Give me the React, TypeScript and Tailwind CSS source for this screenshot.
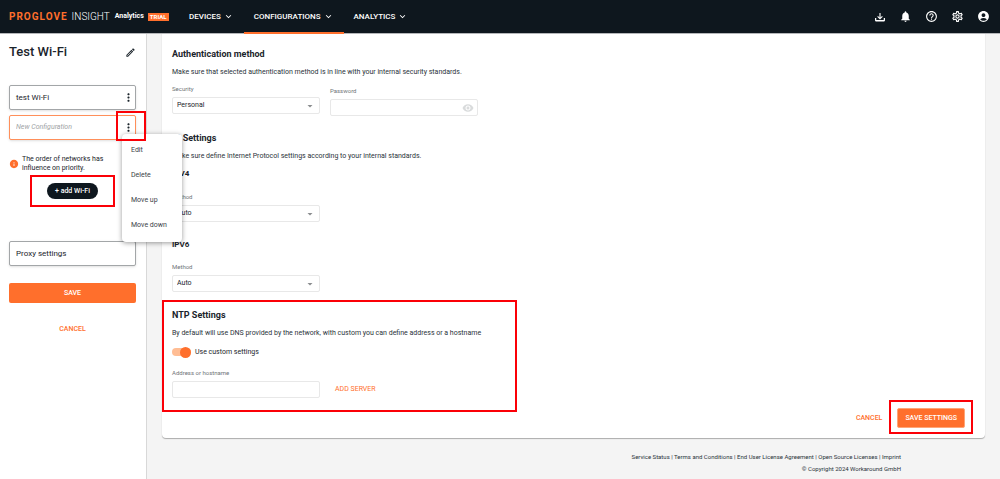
import { useState, type ReactNode } from "react";
import {
  MdAccountCircle,
  MdArrowDropDown,
  MdHelpOutline,
  MdInfo,
  MdKeyboardArrowDown,
  MdMoreVert,
  MdNotifications,
  MdOutlineEdit,
  MdOutlineSettings,
  MdVisibility,
} from "react-icons/md";

const NAV = ["DEVICES", "CONFIGURATIONS", "ANALYTICS"];
const MENU = ["Edit", "Delete", "Move up", "Move down"];
const LINKS = [
  "Service Status",
  "Terms and Conditions",
  "End User License Agreement",
  "Open Source Licenses",
  "Imprint",
];

// red callout frame around a parent that is `relative`
function Callout({ className }: { className: string }) {
  return (
    <span className={`pointer-events-none absolute z-30 border-2 border-[#fb0007] ${className}`} />
  );
}

function TrayIcon() {
  return (
    <svg viewBox="0 0 24 24" fill="currentColor" className="size-3">
      <path d="M2 14h2.500v4h15v-4H22v4.500c0 1.300-1 2.500-2.500 2.500h-15C3 21 2 19.800 2 18.500V14m10 3 5.500-5.500-1.500-1.500-2.900 2.900V4h-2.200v8.900L8 10l-1.500 1.500L12 17z" />
    </svg>
  );
}

function Header() {
  return (
    <header className="relative z-10 flex h-[33px] items-center bg-[#0e171e] pr-[10px] pl-[9px] text-white shadow-[0_1px_0_#b4b6b9]">
      <div className="flex w-[170px] items-center whitespace-nowrap">
        <span className="text-[10px] font-bold tracking-widest text-[#ff6f2c]">PROGLOVE</span>
        <span className="ml-1 text-[10px] font-light">INSIGHT</span>
        <span className="ml-[5px] text-[7px] font-bold">Analytics</span>
        <span className="ml-1 bg-[#ff6f2c] px-[2px] text-[6px] leading-[8px] font-bold">TRIAL</span>
      </div>
      <nav className="flex h-full">
        {NAV.map((item) => (
          <button
            key={item}
            type="button"
            className="relative flex items-center gap-[2px] px-[10px] text-[8px] font-medium"
          >
            {item}
            <MdKeyboardArrowDown className="size-[11px]" />
            {item === "CONFIGURATIONS" && (
              <span className="absolute inset-x-0 -bottom-px h-[2px] bg-[#ff6f2c]" />
            )}
          </button>
        ))}
      </nav>
      <div className="ml-auto flex items-center gap-[13px]">
        <button type="button" aria-label="Downloads">
          <TrayIcon />
        </button>
        <button type="button" aria-label="Notifications">
          <MdNotifications className="size-[13px]" />
        </button>
        <button type="button" aria-label="Help">
          <MdHelpOutline className="size-[13px]" />
        </button>
        <button type="button" aria-label="Settings">
          <MdOutlineSettings className="size-[13px]" />
        </button>
        <button type="button" aria-label="Account">
          <MdAccountCircle className="size-[13px]" />
        </button>
      </div>
    </header>
  );
}

function ContextMenu() {
  return (
    <div
      role="menu"
      className="absolute top-[18px] left-[112px] z-20 flex w-[60px] flex-col rounded-sm bg-white py-1 shadow-[0_1px_5px_rgba(0,0,0,0.4)]"
    >
      {MENU.map((item) => (
        <button
          key={item}
          type="button"
          role="menuitem"
          className="h-[25px] px-[9px] text-left text-[7px] whitespace-nowrap text-[#3b4248]"
        >
          {item}
        </button>
      ))}
    </div>
  );
}

const box = "flex h-[25px] items-center rounded-xs border bg-white pl-[6px]";

function Sidebar() {
  return (
    <aside className="w-[147px] shrink-0 border-r border-[#d8d8d8] bg-white pt-[10px] pr-[10px] pl-[9px]">
      <div className="flex h-[18px] items-center justify-between">
        <h1 className="text-[13px] font-medium">Test Wi-Fi</h1>
        <button type="button" aria-label="Rename">
          <MdOutlineEdit className="size-[11px]" />
        </button>
      </div>

      <div className={`${box} mt-6 justify-between border-[#a3a6a8] shadow-sm`}>
        <span className="text-[8px]">test Wi-Fi</span>
        <button type="button" aria-label="Network options">
          <MdMoreVert className="size-[13px]" />
        </button>
      </div>
      <div className={`${box} relative mt-[5px] border-[#ff8f5a] shadow-sm`}>
        <input
          aria-label="Configuration name"
          placeholder="New Configuration"
          className="w-[100px] text-[7px] italic outline-none placeholder:text-[#a0a3a5]"
        />
        <button type="button" aria-label="New configuration options" className="ml-auto">
          <MdMoreVert className="size-[13px]" />
        </button>
        <Callout className="-top-[5px] -right-[11px] size-[30px]" />
        <ContextMenu />
      </div>

      <div className="mt-[15px] flex items-center gap-[3px]">
        <MdInfo className="size-[10px] shrink-0 text-[#ff6f2c]" />
        <p className="w-[90px] text-[7px] leading-[9px]">
          The order of networks has influence on priority.
        </p>
      </div>
      <div className="mt-[10px] flex justify-center">
        <div className="relative">
          <button
            type="button"
            className="block h-4 rounded-full bg-[#0e171e] px-2 text-[7px] font-medium text-white"
          >
            + add Wi-Fi
          </button>
          <Callout className="-inset-x-[17px] -inset-y-2" />
        </div>
      </div>

      <button type="button" className={`${box} mt-[42px] w-full border-[#a3a6a8] text-[8px] shadow-sm`}>
        Proxy settings
      </button>
      <button
        type="button"
        className="mt-[17px] block h-5 w-full rounded-xs bg-[#ff6f2c] text-[7px] font-medium text-white"
      >
        SAVE
      </button>
      <button
        type="button"
        className="mt-4 block h-5 w-full text-[7px] font-medium text-[#ff6f2c]"
      >
        CANCEL
      </button>
    </aside>
  );
}

const label = "block text-[6px] leading-[10px] text-[#6f7478]";
const control =
  "block h-[17px] w-full rounded-xs border border-[#e8e8e8] bg-white text-[7px] outline-none";

function SelectField({ id, name, value }: { id: string; name: string; value: string }) {
  return (
    <div className="w-[148px]">
      <label htmlFor={id} className={label}>
        {name}
      </label>
      <div className="relative mt-[3px]">
        <select id={id} defaultValue={value} className={`${control} appearance-none px-1`}>
          <option>{value}</option>
        </select>
        <MdArrowDropDown className="pointer-events-none absolute top-[3px] right-1 size-3 text-[#8a8d8f]" />
      </div>
    </div>
  );
}

function Title({ children }: { children: ReactNode }) {
  return <h2 className="text-[9px] leading-3 font-bold">{children}</h2>;
}

function Hint({ children }: { children: ReactNode }) {
  return <p className="mt-[6px] text-[7px] leading-3 text-[#2a333a]">{children}</p>;
}

export default function App() {
  const [custom, setCustom] = useState(true);

  return (
    <div className="flex min-h-screen flex-col bg-[#f4f4f4] font-[Roboto,sans-serif] text-[#1b242b]">
      <Header />
      <div className="flex flex-1">
        <Sidebar />
        <div className="min-w-0 flex-1 pr-[15px] pl-[15px]">
          <main className="rounded-b-sm bg-white px-[10px] pt-[15px] pb-[10px] shadow-[0_1px_1px_rgba(0,0,0,0.3)]">
            <section>
              <Title>Authentication method</Title>
              <Hint>
                Make sure that selected authentication method is in line with your internal security
                standards.
              </Hint>
              <div className="mt-[6px] flex gap-[10px]">
                <SelectField id="security" name="Security" value="Personal" />
                <div className="w-[148px] pt-[2px]">
                  <label htmlFor="password" className={label}>
                    Password
                  </label>
                  <div className="relative mt-[3px]">
                    <input id="password" type="password" className={`${control} pr-5 pl-1`} />
                    <button
                      type="button"
                      aria-label="Show password"
                      className="absolute top-[3px] right-1 text-[#d9dbdc]"
                    >
                      <MdVisibility className="size-3" />
                    </button>
                  </div>
                </div>
              </div>
            </section>

            <section className="mt-4">
              <Title>IP Settings</Title>
              <Hint>
                Make sure define Internet Protocol settings according to your internal standards.
              </Hint>
              <h3 className="mt-[6px] mb-3 text-[8px] leading-3 font-bold">IPV4</h3>
              <SelectField id="ipv4" name="Method" value="Auto" />
              <h3 className="mt-[17px] mb-[11px] text-[8px] leading-3 font-bold">IPV6</h3>
              <SelectField id="ipv6" name="Method" value="Auto" />
            </section>

            <section className="relative mt-[17px] w-[345px]">
              <Title>NTP Settings</Title>
              <Hint>
                By default will use DNS provided by the network, with custom you can define address
                or a hostname
              </Hint>
              <label className="mt-[7px] flex h-3 items-center gap-1 text-[7px]">
                <input
                  type="checkbox"
                  checked={custom}
                  onChange={(e) => setCustom(e.target.checked)}
                  className="peer sr-only"
                />
                <span className="flex h-2 w-[19px] items-center rounded-full bg-[#d0d0d0] peer-checked:justify-end peer-checked:bg-[#ffbd94] peer-checked:[&>i]:bg-[#ff6f2c]">
                  <i className="size-[11px] shrink-0 rounded-full bg-white" />
                </span>
                Use custom settings
              </label>
              <div className="mt-[10px] flex items-end gap-[15px]">
                <div className="w-[148px]">
                  <label htmlFor="host" className={label}>
                    Address or hostname
                  </label>
                  <input id="host" className={`${control} mt-[3px] px-1`} />
                </div>
                <button type="button" className="h-[17px] text-[7px] text-[#ff6f2c]">
                  ADD SERVER
                </button>
              </div>
              <Callout className="-top-[9px] right-0 -bottom-[14px] -left-[10px]" />
            </section>

            <div className="mt-[10px] flex justify-end gap-[15px] pr-[10px]">
              <button type="button" className="text-[7px] font-medium text-[#ff6f2c]">
                CANCEL
              </button>
              <div className="relative">
                <button
                  type="button"
                  className="block h-5 rounded-xs border border-[#ffa577] bg-[#ff6f2c] px-[7px] text-[7px] font-medium text-white"
                >
                  SAVE SETTINGS
                </button>
                <Callout className="-inset-x-2 -top-2 -bottom-[6px]" />
              </div>
            </div>
          </main>

          <footer className="pt-[13px] pr-[84px] text-right text-[6px] leading-3 text-[#2a333a]">
            <p>
              {LINKS.map((link, i) => (
                <span key={link}>
                  {i > 0 && " | "}
                  <a href="#">{link}</a>
                </span>
              ))}
            </p>
            <p>© Copyright 2024 Workaround GmbH</p>
          </footer>
        </div>
      </div>
    </div>
  );
}
